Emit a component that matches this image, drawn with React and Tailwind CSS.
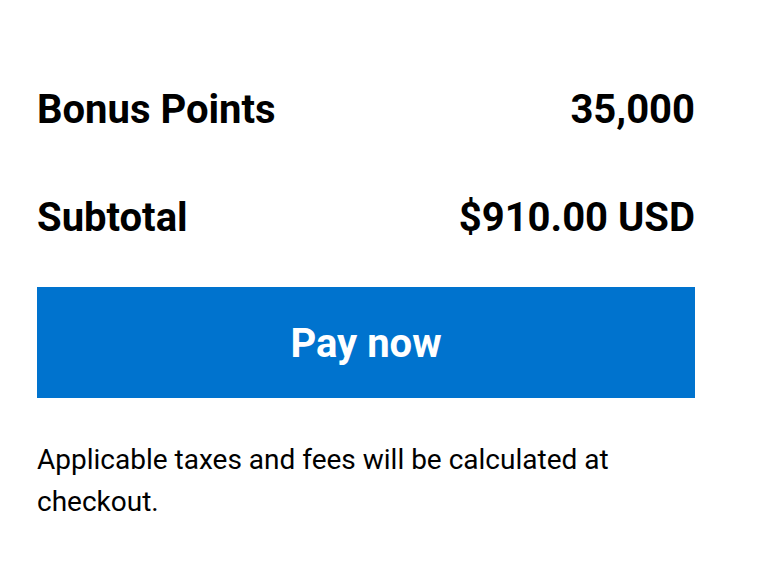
export default function App() {
  return (
    <div className="min-h-[581px] bg-white" style={{ fontFamily: "Roboto, 'Liberation Sans', sans-serif" }}>
      <div className="w-[658px] ml-[37px] pt-[56px]">
        <div className="flex h-[108px] items-center justify-between text-[40px] font-bold text-black">
          <span>Bonus Points</span>
          <span>35,000</span>
        </div>
        <div className="flex h-[108px] items-center justify-between text-[40px] font-bold text-black">
          <span>Subtotal</span>
          <span>$910.00 USD</span>
        </div>
        <button className="mt-[15px] flex h-[111px] w-full items-center justify-center bg-[#0073ce] pt-[2px] text-[40px] font-bold text-white">
          Pay now
        </button>
        <p className="mt-[41px] text-[28px] leading-[42px] text-black">
          Applicable taxes and fees will be calculated at checkout.
        </p>
      </div>
    </div>
  )
}
